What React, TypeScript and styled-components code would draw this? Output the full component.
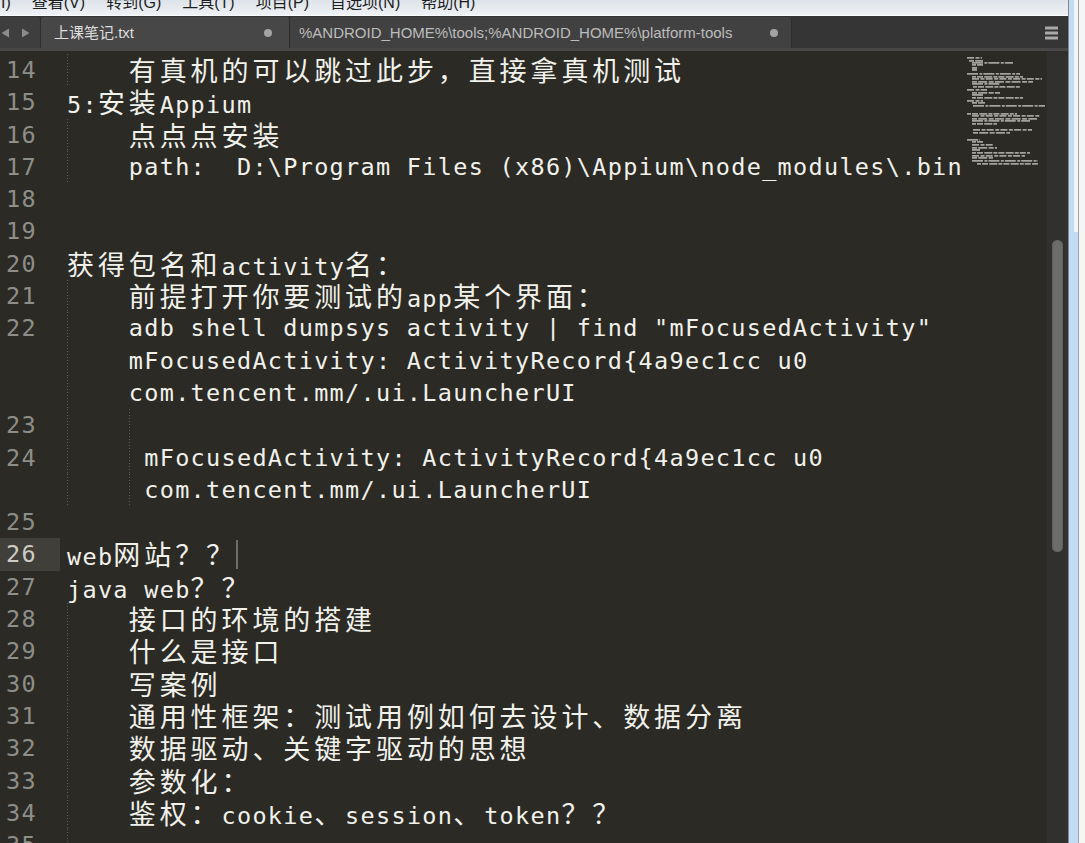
import React from "react";
import styled, { createGlobalStyle } from "styled-components";

const COL = 15.45;
const ROW = 32.3;
const CJK_SIZE = 27;

const GlobalStyle = createGlobalStyle`
  html, body { margin: 0; padding: 0; background: #2b2a25; overflow: hidden; }
  #root { width: 1085px; height: 843px; }
`;

const Screen = styled.div`
  display: flex;
  width: 1085px;
  height: 843px;
  overflow: hidden;
`;

const Window = styled.div`
  display: flex;
  flex-direction: column;
  width: 1068px;
  height: 843px;
  flex: none;
  background: #2b2a25;
`;

/* ---------- menu bar ---------- */
const MenuBar = styled.div`
  height: 16px;
  flex: none;
  overflow: hidden;
  box-sizing: border-box;
  background: linear-gradient(#dde3ea, #eff2f5);
  border-bottom: 1px solid #fbfcfd;
`;

const MenuList = styled.div`
  display: flex;
  gap: 21px;
  margin-top: -5px;
  padding-left: 1px;
  font: 16px/16px "Liberation Sans", "Noto Sans CJK SC", sans-serif;
  color: #1e1e1e;
  white-space: nowrap;
`;

const MenuItem = styled.span``;

/* ---------- tab bar ---------- */
const TabBar = styled.div`
  height: 35px;
  flex: none;
  display: flex;
  flex-direction: column;
  background: #353535;
`;

const TabRow = styled.div`
  display: flex;
  align-items: stretch;
  height: 32px;
  padding-top: 1px;
  box-sizing: border-box;
`;

const TabBand = styled.div`
  height: 3px;
  background: #474747;
`;

const NavArrows = styled.div`
  width: 41px;
  flex: none;
  display: flex;
  align-items: center;
  gap: 11px;
  padding-left: 1px;
  box-sizing: border-box;
  background: #3e3e3e;
  border-right: 1px solid #2f2f2f;
  border-radius: 0 3px 0 0;
`;

const Tab = styled.div<{ $active?: boolean; $width: number; $pl: number; $pr: number }>`
  width: ${(p) => p.$width}px;
  flex: none;
  box-sizing: border-box;
  display: flex;
  align-items: center;
  justify-content: space-between;
  padding: 0 ${(p) => p.$pr}px 0 ${(p) => p.$pl}px;
  background: ${(p) => (p.$active ? "#474747" : "#414141")};
  border-right: 1px solid #2e2e2e;
  border-radius: 3px 3px 0 0;
  font: 15px/20px "Liberation Sans", "Noto Sans CJK SC", sans-serif;
  color: ${(p) => (p.$active ? "#dedede" : "#bcbcbc")};
  white-space: nowrap;
`;

const Dot = styled.span`
  width: 8px;
  height: 8px;
  border-radius: 50%;
  background: #a3a3a3;
  flex: none;
`;

const MenuIcon = styled.div`
  margin-left: auto;
  margin-right: 10px;
  display: flex;
  align-items: center;
`;

/* ---------- editor ---------- */
const Editor = styled.div`
  flex: 1;
  min-height: 0;
  display: flex;
  background: #2b2a25;
`;

const TextArea = styled.div`
  flex: 1;
  min-width: 0;
  overflow: hidden;
  padding-top: 3px;
  font-family: "DejaVu Sans Mono", "Liberation Mono", monospace;
  font-size: 23.5px;
  letter-spacing: 1.3px;
  line-height: ${ROW}px;
  color: #f1f1eb;
`;

const Line = styled.div`
  display: flex;
  height: ${ROW}px;
`;

const LineNo = styled.div<{ $current?: boolean }>`
  flex: none;
  width: 60px;
  box-sizing: border-box;
  padding-right: 23px;
  text-align: right;
  color: ${(p) => (p.$current ? "#cdcdc6" : "#8e8e88")};
  background: ${(p) => (p.$current ? "#403f39" : "transparent")};
`;

const Code = styled.div`
  position: relative;
  flex: 1;
  min-width: 0;
  padding-left: 7px;
  white-space: pre;
  overflow: hidden;
`;

const Wide = styled.span`
  font-family: "Noto Sans CJK SC", sans-serif;
  font-size: ${CJK_SIZE}px;
  letter-spacing: ${2 * COL - CJK_SIZE}px;
`;

const Guide = styled.span<{ $col: number }>`
  position: absolute;
  top: 0;
  bottom: 0;
  left: ${(p) => 7 + p.$col * COL}px;
  width: 1px;
  background: repeating-linear-gradient(to bottom, #5d5c55 0 1px, transparent 1px 3px);
`;

const Caret = styled.span<{ $col: number }>`
  position: absolute;
  top: 2px;
  height: 29px;
  width: 2px;
  left: ${(p) => 7 + p.$col * COL - 1}px;
  background: #6d6c67;
`;

const Minimap = styled.div`
  width: 82px;
  flex: none;
`;

const ScrollTrack = styled.div`
  width: 21px;
  flex: none;
  box-sizing: border-box;
  display: flex;
  flex-direction: column;
  padding: 189px 5px 0 5px;
  background: #31302e;
`;

const Thumb = styled.div`
  width: 11px;
  height: 312px;
  border-radius: 6px;
  background: #6c6c6b;
  box-shadow: inset 0 0 0 1px #5f5f5e;
`;

/* ---------- right window edge ---------- */
const Edge = styled.div`
  flex: 1;
  display: flex;
  height: 843px;
`;

const EdgeLine = styled.div<{ $color: string }>`
  width: 1px;
  flex: none;
  background: ${(p) => p.$color};
`;

const BlueCol = styled.div`
  width: 5px;
  flex: none;
  background: #c3dbf3;
`;

const SplitCol = styled.div`
  width: 4px;
  flex: none;
  background: linear-gradient(to bottom, #f3f5f8 0 232px, #c3dbf3 232px);
`;

const WhiteCol = styled.div`
  flex: 1;
  background: #f5f5f5;
`;

/* ---------- data ---------- */
type Row = { n?: number; t: string; g?: number[]; cur?: boolean; caret?: number };

const ROWS: Row[] = [
  { n: 14, t: "    有真机的可以跳过此步，直接拿真机测试", g: [0] },
  { n: 15, t: "5:安装Appium" },
  { n: 16, t: "    点点点安装", g: [0] },
  { n: 17, t: "    path:  D:\\Program Files (x86)\\Appium\\node_modules\\.bin", g: [0] },
  { n: 18, t: "" },
  { n: 19, t: "" },
  { n: 20, t: "获得包名和activity名：" },
  { n: 21, t: "    前提打开你要测试的app某个界面：", g: [0] },
  { n: 22, t: '    adb shell dumpsys activity | find "mFocusedActivity"', g: [0] },
  { t: "    mFocusedActivity: ActivityRecord{4a9ec1cc u0", g: [0] },
  { t: "    com.tencent.mm/.ui.LauncherUI", g: [0] },
  { n: 23, t: "     ", g: [0, 4] },
  { n: 24, t: "     mFocusedActivity: ActivityRecord{4a9ec1cc u0", g: [0, 4] },
  { t: "     com.tencent.mm/.ui.LauncherUI", g: [0, 4] },
  { n: 25, t: "" },
  { n: 26, t: "web网站？？", cur: true, caret: 11 },
  { n: 27, t: "java web？？" },
  { n: 28, t: "    接口的环境的搭建", g: [0] },
  { n: 29, t: "    什么是接口", g: [0] },
  { n: 30, t: "    写案例", g: [0] },
  { n: 31, t: "    通用性框架：测试用例如何去设计、数据分离", g: [0] },
  { n: 32, t: "    数据驱动、关键字驱动的思想", g: [0] },
  { n: 33, t: "    参数化：", g: [0] },
  { n: 34, t: "    鉴权：cookie、session、token？？", g: [0] },
  { n: 35, t: "", g: [0] },
];

const WIDE_RE = /([\u3000-\u303f\u4e00-\u9fff\uff00-\uffef]+)/;

function renderText(t: string) {
  return t.split(WIDE_RE).map((part, i) =>
    i % 2 === 1 ? <Wide key={i}>{part}</Wide> : <React.Fragment key={i}>{part}</React.Fragment>
  );
}

const MINI: [number, number, number][] = [
  [6, 2, 15], [9, 4, 14], [11, 7, 41], [13, 7, 11], [16, 7, 5], [18, 7, 5],
  [22, 2, 53], [25, 7, 51], [27, 7, 70], [30, 7, 61], [32, 7, 28], [35, 8, 47],
  [38, 2, 20], [41, 7, 28], [43, 7, 11], [46, 7, 51], [49, 2, 16], [51, 7, 13],
  [54, 8, 72], [62, 2, 50], [64, 7, 68], [67, 7, 65], [69, 7, 58], [72, 7, 25],
  [78, 8, 59], [81, 8, 37], [88, 2, 13], [90, 7, 11], [93, 7, 21], [96, 7, 25],
  [98, 7, 8], [101, 7, 58], [104, 7, 53], [106, 7, 21], [109, 7, 66], [112, 12, 61],
];

const DASHES = ["7 1.5 4 1.2", "5 1.2 9 1.5", "11 1.4 3 1", "4 1 6 1.3 8 1.1"];

export default function App() {
  return (
    <Screen>
      <GlobalStyle />
      <Window>
        <MenuBar>
          <MenuList>
            <MenuItem>I)</MenuItem>
            <MenuItem>查看(V)</MenuItem>
            <MenuItem>转到(G)</MenuItem>
            <MenuItem>工具(T)</MenuItem>
            <MenuItem>项目(P)</MenuItem>
            <MenuItem>首选项(N)</MenuItem>
            <MenuItem>帮助(H)</MenuItem>
          </MenuList>
        </MenuBar>

        <TabBar>
          <TabRow>
            <NavArrows>
              <svg width="9" height="10" viewBox="0 0 9 10">
                <path d="M8 0.5 L0.5 5 L8 9.5 Z" fill="#8c8c8c" />
              </svg>
              <svg width="9" height="10" viewBox="0 0 9 10">
                <path d="M1 0.5 L8.5 5 L1 9.5 Z" fill="#8c8c8c" />
              </svg>
            </NavArrows>
            <Tab $active $width={249} $pl={13} $pr={17}>
              <span>上课笔记.txt</span>
              <Dot />
            </Tab>
            <Tab $width={502} $pl={9} $pr={13}>
              <span>%ANDROID_HOME%\tools;%ANDROID_HOME%\platform-tools</span>
              <Dot />
            </Tab>
            <MenuIcon>
              <svg width="13" height="14" viewBox="0 0 13 14">
                <rect x="0" y="0.5" width="13" height="3" rx="0.5" fill="#a9a9a9" />
                <rect x="0" y="5.5" width="13" height="3" rx="0.5" fill="#a9a9a9" />
                <rect x="0" y="10.5" width="13" height="3" rx="0.5" fill="#a9a9a9" />
              </svg>
            </MenuIcon>
          </TabRow>
          <TabBand />
        </TabBar>

        <Editor>
          <TextArea>
            {ROWS.map((r, i) => (
              <Line key={i}>
                <LineNo $current={r.cur}>{r.n ?? ""}</LineNo>
                <Code>
                  {(r.g ?? []).map((c) => (
                    <Guide key={c} $col={c} />
                  ))}
                  {renderText(r.t)}
                  {r.caret !== undefined && <Caret $col={r.caret} />}
                </Code>
              </Line>
            ))}
          </TextArea>
          <Minimap>
            <svg width="82" height="180" viewBox="0 0 82 180">
              {MINI.map(([y, x, w], i) => (
                <line
                  key={i}
                  x1={x}
                  x2={x + w}
                  y1={y + 0.9}
                  y2={y + 0.9}
                  stroke="#a3a29c"
                  strokeWidth={1.9}
                  strokeDasharray={DASHES[i % DASHES.length]}
                />
              ))}
            </svg>
          </Minimap>
          <ScrollTrack>
            <Thumb />
          </ScrollTrack>
        </Editor>
      </Window>
      <Edge>
        <EdgeLine $color="#7f8894" />
        <BlueCol />
        <SplitCol />
        <EdgeLine $color="#9aa3ad" />
        <WhiteCol />
      </Edge>
    </Screen>
  );
}
